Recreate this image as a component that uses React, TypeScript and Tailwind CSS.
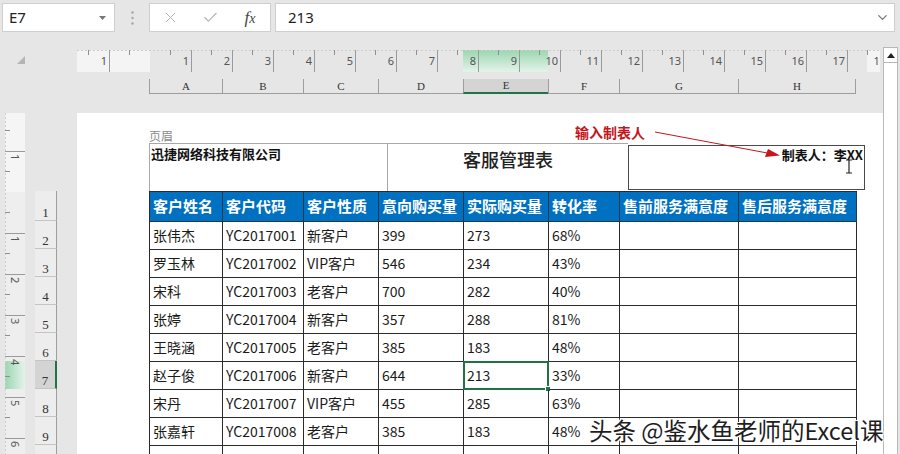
import { X, Check, ChevronDown } from "lucide-react";

const HEAD = ["客户姓名", "客户代码", "客户性质", "意向购买量", "实际购买量", "转化率", "售前服务满意度", "售后服务满意度"];
const LETTERS = ["A", "B", "C", "D", "E", "F", "G", "H"];
const ROWS = [
  ["张伟杰", "YC2017001", "新客户", "399", "273", "68%"],
  ["罗玉林", "YC2017002", "VIP客户", "546", "234", "43%"],
  ["宋科", "YC2017003", "老客户", "700", "282", "40%"],
  ["张婷", "YC2017004", "新客户", "357", "288", "81%"],
  ["王晓涵", "YC2017005", "老客户", "385", "183", "48%"],
  ["赵子俊", "YC2017006", "新客户", "644", "213", "33%"],
  ["宋丹", "YC2017007", "VIP客户", "455", "285", "63%"],
  ["张嘉轩", "YC2017008", "老客户", "385", "183", "48%"],
  ["", "", "", "", "", ""],
];
const GRID = "grid grid-cols-[73px_81px_75px_85px_85px_71px_119px_118px]";
const cjk = "font-['Noto_Sans_CJK_SC','Noto_Sans',sans-serif]";

const HRuler = () => {
  const x = (n: number) => 73 + 41 * n;
  const majors = [-1, ...Array.from({ length: 18 }, (_, i) => i + 1)];
  const halves = Array.from({ length: 20 }, (_, i) => i - 2);
  return (
    <svg width="803" height="22" className="block shrink-0">
      <defs>
        <linearGradient id="hg" x1="0" y1="0" x2="0" y2="1">
          <stop offset="0" stopColor="#9bd6b0" />
          <stop offset="1" stopColor="#e4f3ea" />
        </linearGradient>
      </defs>
      <rect x="0" y="0" width="73" height="22" fill="#f4f4f4" />
      <rect x="790" y="0" width="13" height="22" fill="#f4f4f4" />
      <rect x="386" y="0" width="85" height="22" fill="url(#hg)" />
      <line x1="0" y1="0.5" x2="803" y2="0.5" stroke="#cdcdcd" strokeDasharray="2 2" />
      {halves.map((n) => (
        <line key={"h" + n} x1={x(n) + 20.5} y1="0" x2={x(n) + 20.5} y2="5" stroke="#8f8f8f" />
      ))}
      {majors.map((n) => (
        <g key={n}>
          <line x1={x(n) + 0.5} y1="0" x2={x(n) + 0.5} y2="22" stroke="#9a9a9a" />
          <text x={x(n) - 2} y="15" textAnchor="end" fontSize="11" fill="#555" fontFamily="Noto Sans, sans-serif">
            {n === -1 ? 1 : n}
          </text>
        </g>
      ))}
    </svg>
  );
};

const VRuler = () => {
  const y = (n: number) => 79 + 41 * n;
  const majors = [-1, 1, 2, 3, 4, 5, 6];
  const halves = Array.from({ length: 9 }, (_, i) => i - 2);
  return (
    <svg width="20" height="341" className="block">
      <defs>
        <linearGradient id="vg" x1="0" y1="0" x2="1" y2="0">
          <stop offset="0" stopColor="#9bd6b0" />
          <stop offset="1" stopColor="#e4f3ea" />
        </linearGradient>
      </defs>
      <rect x="0" y="0" width="20" height="341" fill="#eeeeee" />
      <rect x="0" y="0" width="20" height="79" fill="#f5f5f5" />
      <rect x="0" y="248" width="20" height="28" fill="url(#vg)" />
      <line x1="0.5" y1="0" x2="0.5" y2="341" stroke="#cdcdcd" strokeDasharray="2 2" />
      {halves.map((n) => (
        <line key={"h" + n} x1="0" y1={y(n) + 20.5} x2="5" y2={y(n) + 20.5} stroke="#8f8f8f" />
      ))}
      {majors.map((n) => (
        <g key={n}>
          <line x1="0" y1={y(n) + 0.5} x2="20" y2={y(n) + 0.5} stroke="#9a9a9a" />
          <text transform={`translate(6 ${y(n) + 3}) rotate(90)`} fontSize="11" fill="#555" fontFamily="Noto Sans, sans-serif">
            {n === -1 ? 1 : n}
          </text>
        </g>
      ))}
    </svg>
  );
};

const FormulaBar = () => (
  <div className="h-[36px] shrink-0 flex items-start pt-[3px]">
    <div className="ml-[2px] w-[113px] h-[29px] bg-white border border-[#cfcfcf] flex items-center justify-between pl-[6px] pr-[8px]">
      <span className="text-[15px] text-[#222] font-['Noto_Sans',sans-serif]">E7</span>
      <svg width="7" height="4"><polygon points="0,0 7,0 3.5,4" fill="#777" /></svg>
    </div>
    <div className="w-[34px] h-[29px] flex items-center justify-center">
      <svg width="3" height="14">
        <circle cx="1.5" cy="1.5" r="1.2" fill="#a5a5a5" />
        <circle cx="1.5" cy="7" r="1.2" fill="#a5a5a5" />
        <circle cx="1.5" cy="12.5" r="1.2" fill="#a5a5a5" />
      </svg>
    </div>
    <div className="w-[122px] h-[29px] bg-white border border-[#cfcfcf] flex items-center">
      <div className="w-[40px] flex justify-center"><X size={17} strokeWidth={1.4} color="#b3b3b3" /></div>
      <div className="w-[40px] flex justify-center"><Check size={17} strokeWidth={1.6} color="#b3b3b3" /></div>
      <div className="w-[40px] flex justify-center">
        <span className="italic text-[17px] text-[#444] font-['Liberation_Serif',serif]">f<span className="text-[14px]">x</span></span>
      </div>
    </div>
    <div className="ml-[4px] w-[620px] h-[29px] bg-white border border-[#cfcfcf] flex items-center justify-between pl-[12px] pr-[4px]">
      <span className="text-[15px] text-[#222] font-['Noto_Sans',sans-serif]">213</span>
      <ChevronDown size={15} strokeWidth={2} color="#777" />
    </div>
  </div>
);

const Table = () => (
  <div className={`${GRID} border-l border-t border-[#2b2b2b] w-[708px]`}>
    {HEAD.map((h) => (
      <div key={h} className="h-[30px] bg-[#0070c0] border-r border-b border-[#22384f] flex items-center pl-[3px] text-white font-bold text-[15px]">
        {h}
      </div>
    ))}
    {ROWS.map((r, ri) =>
      [...r, "", ""].map((c, ci) => (
        <div key={ri + "-" + ci} className="relative h-[28px] border-r border-b border-[#2b2b2b] flex items-center pl-[3px] text-[14px] text-[#1a1a1a]">
          {c}
          {ri === 5 && ci === 4 && (
            <div className="absolute -left-px -top-px -right-px -bottom-px border-2 border-[#217346]">
              <div className="absolute -right-[4px] -bottom-[4px] w-[6px] h-[6px] bg-[#217346] border border-white" />
            </div>
          )}
        </div>
      ))
    )}
  </div>
);

export default function App() {
  return (
    <div className={`relative w-[900px] h-[454px] overflow-hidden bg-[#e6e6e6] flex flex-col ${cjk}`}>
      <FormulaBar />
      <div className="flex h-[418px] shrink-0 overflow-hidden">
        {/* left: corner, vertical ruler, row numbers */}
        <div className="w-[77px] shrink-0 flex flex-col overflow-hidden">
          <div className="h-[77px] shrink-0 pt-[20px] pl-[17px]">
            <svg width="8" height="8"><polygon points="8,0 8,8 0,8" fill="#b5b5b5" /></svg>
          </div>
          <div className="flex h-[341px] shrink-0 overflow-hidden">
            <div className="ml-[5px] shrink-0"><VRuler /></div>
            <div className="ml-[10px] w-[22px] shrink-0 pt-[78px] flex flex-col">
              {Array.from({ length: 10 }, (_, i) => i + 1).map((n) => (
                <div
                  key={n}
                  className={`${n === 1 ? "h-[30px]" : "h-[28px]"} shrink-0 border-b border-[#c4c4c4] flex items-end justify-center pb-[1px] text-[13px] leading-none text-[#333] font-['Liberation_Serif',serif] ${
                    n === 7 ? "bg-[#d4d4d4] border-r-2 border-r-[#217346]" : "bg-[#ededed] border-r border-r-[#9d9d9d]"
                  }`}
                >
                  {n}
                </div>
              ))}
            </div>
          </div>
        </div>

        {/* ruler, column letters, page */}
        <div className="w-[806px] shrink-0 flex flex-col">
          <div className="h-[14px] shrink-0" />
          <HRuler />
          <div className="h-[7px] shrink-0" />
          <div className={`${GRID} ml-[72px] w-[708px] h-[15px] shrink-0`}>
            {LETTERS.map((l, i) => (
              <div
                key={l}
                className={`border-l border-[#9d9d9d] ${i === 7 ? "border-r" : ""} ${
                  l === "E" ? "bg-[#d4d4d4] border-b-2 border-b-[#217346]" : "border-b"
                } flex items-center justify-center text-[11px] leading-none text-[#333] font-['Liberation_Serif',serif]`}
              >
                {l}
              </div>
            ))}
          </div>
          <div className="h-[19px] shrink-0" />
          <div className="relative h-[341px] shrink-0 overflow-hidden bg-white pl-[72px] pt-[15px]">
            <div className="h-[15px] text-[12px] leading-[15px] text-[#8a8a8a]">页眉</div>
            <div className="flex h-[48px]">
              <div className="w-[238px] border-l border-t border-[#a8a8a8] pl-[1px] pt-[1px] text-[13px] font-bold text-[#111] leading-[18px]">
                迅捷网络科技有限公司
              </div>
              <div className="w-[241px] border-l border-t border-[#a8a8a8] flex justify-center pt-[4px] text-[18px] font-medium text-[#222] leading-[22px]">
                客服管理表
              </div>
              <div className="w-[237px] h-[45px] mt-[2px] border-[1.5px] border-[#4a4a4a] flex justify-end pr-[1px] text-[13px] font-bold text-[#111] leading-[18px]">
                制表人：李XX
              </div>
            </div>
            <Table />

            {/* annotation */}
            <div className="absolute left-[498px] top-[10px] text-[14px] font-bold text-[#c4161c] leading-[18px]">输入制表人</div>
            <svg className="absolute left-[575px] top-[15px]" width="135" height="32">
              <line x1="3" y1="4" x2="118" y2="25.5" stroke="#c4161c" strokeWidth="1" />
              <polygon points="128,27.5 113,29 116,21" fill="#c4161c" />
            </svg>
            {/* text cursor */}
            <svg className="absolute left-[768px] top-[46px]" width="8" height="16">
              <path d="M1 1h6M4 1v13M1 14h6" stroke="#222" strokeWidth="1.2" fill="none" />
            </svg>
          </div>
        </div>

        {/* scrollbar */}
        <div className="w-[15px] shrink-0 flex flex-col pt-[11px]">
          <div className="h-[16px] shrink-0 bg-white border border-[#b8b8b8] flex items-center justify-center">
            <svg width="8" height="5"><polygon points="0,5 8,5 4,0" fill="#222" /></svg>
          </div>
          <div className="flex-1 bg-white border-x border-[#b8b8b8]" />
        </div>
      </div>

      {/* watermark */}
      <div className="absolute left-[589px] top-[416px] text-[23.5px] leading-[28px] text-[#1e1e1e] whitespace-nowrap [text-shadow:0_0_2px_#fff,1px_1px_0_#fff,-1px_-1px_0_#fff,1px_-1px_0_#fff,-1px_1px_0_#fff]">
        头条 @鉴水鱼老师的Excel课
      </div>
    </div>
  );
}
